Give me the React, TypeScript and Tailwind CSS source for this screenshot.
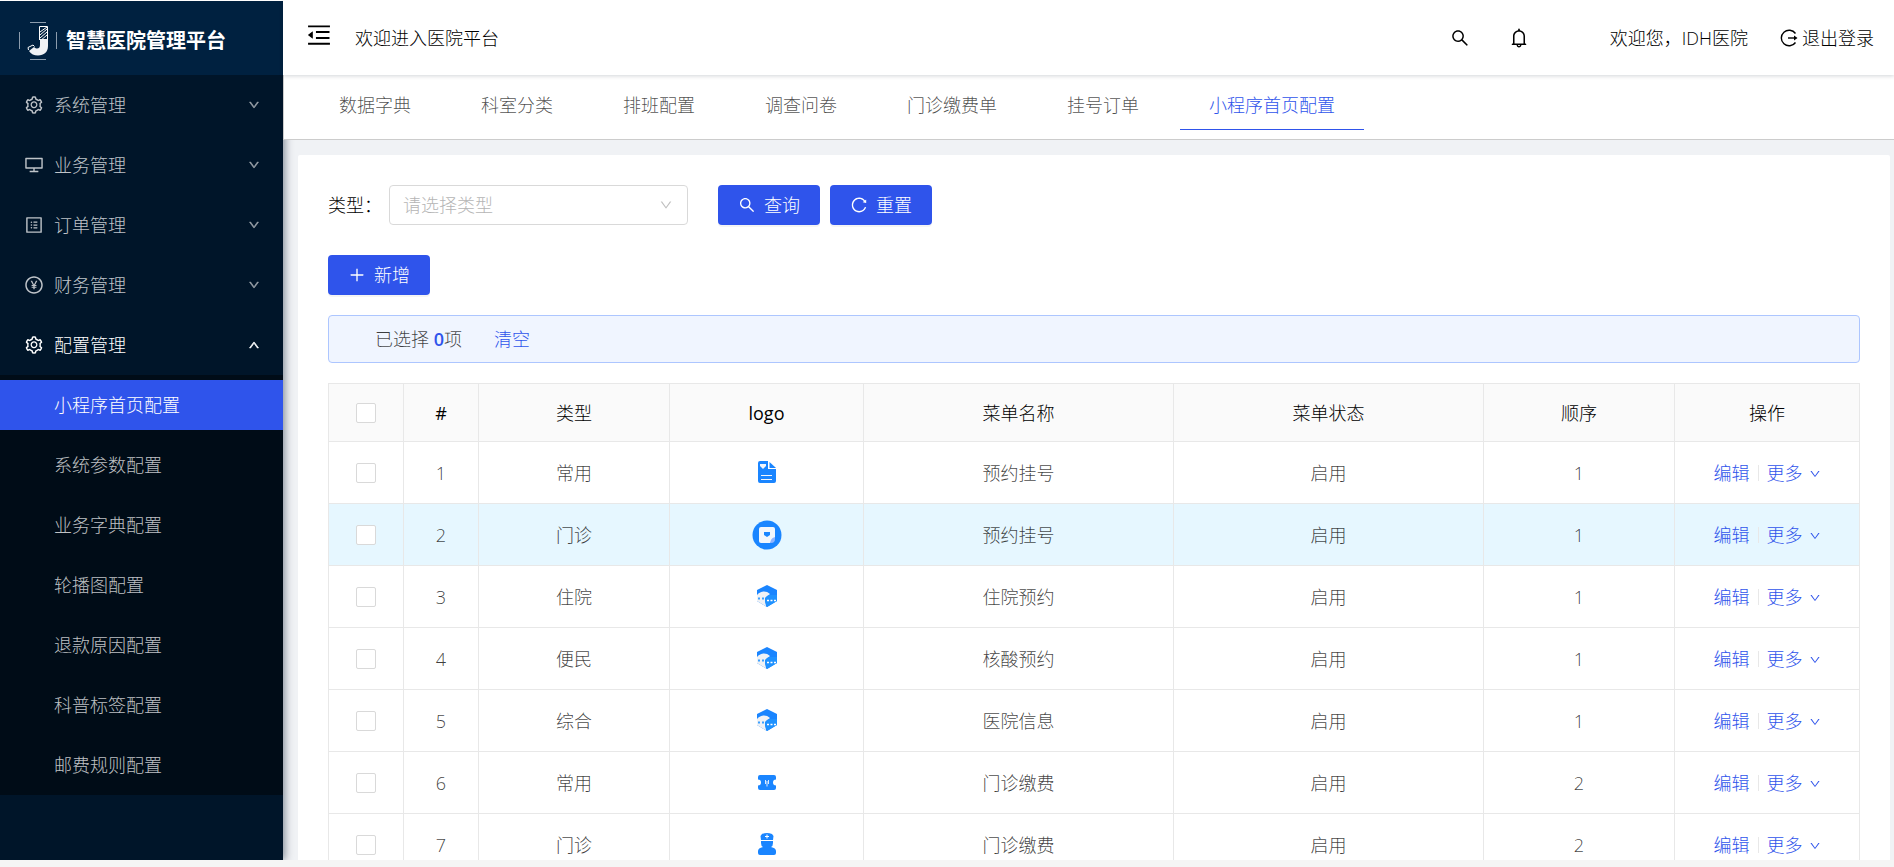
import type { ComponentType } from "react"
import {
  AiOutlineBell,
  AiOutlineDesktop,
  AiOutlineDown,
  AiOutlineMenuFold,
  AiOutlinePayCircle,
  AiOutlinePlus,
  AiOutlineProfile,
  AiOutlineReload,
  AiOutlineSearch,
  AiOutlineSetting,
} from "react-icons/ai"

type IconType = ComponentType<{ className?: string }>

const menus: { label: string; icon: IconType; open?: boolean }[] = [
  { label: "系统管理", icon: AiOutlineSetting },
  { label: "业务管理", icon: AiOutlineDesktop },
  { label: "订单管理", icon: AiOutlineProfile },
  { label: "财务管理", icon: AiOutlinePayCircle },
  { label: "配置管理", icon: AiOutlineSetting, open: true },
]

const subMenus = [
  "小程序首页配置",
  "系统参数配置",
  "业务字典配置",
  "轮播图配置",
  "退款原因配置",
  "科普标签配置",
  "邮费规则配置",
]

const tabs = ["数据字典", "科室分类", "排班配置", "调查问卷", "门诊缴费单", "挂号订单", "小程序首页配置"]

const rows = [
  { type: "常用", logo: DocLogo, name: "预约挂号", order: 1 },
  { type: "门诊", logo: NoteLogo, name: "预约挂号", order: 1 },
  { type: "住院", logo: ChatLogo, name: "住院预约", order: 1 },
  { type: "便民", logo: ChatLogo, name: "核酸预约", order: 1 },
  { type: "综合", logo: ChatLogo, name: "医院信息", order: 1 },
  { type: "常用", logo: TicketLogo, name: "门诊缴费", order: 2 },
  { type: "门诊", logo: NurseLogo, name: "门诊缴费", order: 2 },
]

function DocLogo() {
  return (
    <svg viewBox="0 0 30 30" className="mx-auto size-[30px]">
      <path d="M8 3h8v8h8v12a2 2 0 0 1-2 2H8a2 2 0 0 1-2-2V5a2 2 0 0 1 2-2z" fill="#1a85ff" />
      <path d="M17.500 4l6.500 6h-6.500z" fill="#1a85ff" />
      <path d="M8 6h6v2l-3 3-3-3z" fill="#f2f6fc" />
      <path d="M9 17.500h11M9 21.500h11" stroke="#f2f6fc" />
    </svg>
  )
}

function NoteLogo() {
  return (
    <svg viewBox="0 0 30 30" className="mx-auto size-[30px]">
      <circle cx="15" cy="15" r="14.500" fill="#1a85ff" />
      <path d="M9 7h12a2 2 0 0 1 2 2v9l-5 5H9a2 2 0 0 1-2-2V9a2 2 0 0 1 2-2z" fill="#f2f6fc" />
      <path d="M23 17v2a4 4 0 0 1-4 4h-1c1-4 2-5 5-6z" fill="#8fb4ff" />
      <path d="M12 12h6v3l-3 2-3-2z" fill="#1a85ff" />
    </svg>
  )
}

function ChatLogo() {
  return (
    <svg viewBox="0 0 30 30" className="mx-auto size-[30px]">
      <path d="M15 3l10 5v11l-10 6-10-6V8z" fill="#1a85ff" />
      <path d="M5 13c3-4 9-5 13-1l-5 4 1 8.500L5 19z" fill="#f0f2f5" />
      <path d="M13 20a5.500 5.500 0 0 1 5.500-7H25v6l-10 6z" fill="#1f92ff" />
      <path d="M6 16.500h2M10 16.500h2" stroke="#3ba0ff" strokeWidth="2" />
      <path d="M15 18.500h2M18.500 18.500h2M22 18.500h2" stroke="#fff" strokeWidth="1.600" />
    </svg>
  )
}

function TicketLogo() {
  return (
    <svg viewBox="0 0 30 30" className="mx-auto size-[30px]">
      <path
        d="M8 7h14a2 2 0 0 1 2 2v2.500a3 3 0 0 0 0 6V20a2 2 0 0 1-2 2H8a2 2 0 0 1-2-2v-2.500a3 3 0 0 0 0-6V9a2 2 0 0 1 2-2z"
        fill="#1a85ff"
      />
      <path d="M13.500 12v4M16.500 12v4M15 13v5.500" stroke="#dbeaff" fill="none" />
    </svg>
  )
}

function NurseLogo() {
  return (
    <svg viewBox="0 0 30 30" className="mx-auto size-[30px]">
      <path d="M10 4q5-2 10 0l1.500 2-.5 4H9l-.5-4z" fill="#1a85ff" />
      <path d="M9 11h12v2q0 3-2 4 5 1 5 4v2a2 2 0 0 1-2 2H8a2 2 0 0 1-2-2v-2q0-3 5-4-2-1-2-4z" fill="#1a85ff" />
      <path d="M15 4.500v4M13 6.500h4" stroke="#fff" />
    </svg>
  )
}

function BrandLogo() {
  return (
    <svg viewBox="0 0 40 40" className="size-10" fill="none">
      <path d="M12 1.500h16M12 38.500h16M1.500 11v17M38.500 11v17" stroke="#8c9cad" />
      <path d="M21.500 19V5.500h8V20" stroke="#fff" />
      <path d="M22 11l7-5M22 14l7-6M22 17l7-6M22 20l7-6" stroke="#fff" />
      <path d="M22 18h8v7c0 6-4 9.500-10 9.500-4 0-7-1.500-9-4.500l5-4c3 3 6 1.500 6-2z" fill="#f0f2f5" />
      <path d="M10.500 29l-.5-2.500 5-2.500 1.500 1.500" stroke="#fff" />
    </svg>
  )
}

function LogoutIcon() {
  return (
    <svg viewBox="0 0 18 18" className="size-[18px]" fill="none" stroke="currentColor">
      <path d="M15.500 4.500a7.800 7.800 0 1 0 0 9" strokeWidth="1.400" />
      <path d="M8 9h7" strokeWidth="1.400" />
      <path d="M14 6.500L17.500 9 14 11.500z" fill="currentColor" stroke="none" />
    </svg>
  )
}

function Sidebar() {
  return (
    <aside className="relative z-10 w-[283px] shrink-0 border-t border-white bg-[#001529] shadow-[2px_0_8px_rgba(0,21,41,0.45)]">
      <div className="flex h-[74px] items-center gap-2 bg-[#002140] pl-[18px] pt-1.5">
        <BrandLogo />
        <h1 className="text-xl font-bold text-white">智慧医院管理平台</h1>
      </div>
      <nav className="text-lg text-white/75">
        {menus.map((m) => (
          <div key={m.label} className="py-[5px]">
            <button className={m.open ? "flex h-[50px] w-full items-center pl-6 pr-[23px] text-white" : "flex h-[50px] w-full items-center pl-6 pr-[23px]"}>
              <m.icon className="size-5" />
              <span className="ml-2.5 flex-1 text-left">{m.label}</span>
              <AiOutlineDown className={m.open ? "size-3 rotate-180 stroke-[60]" : "size-3 stroke-[60] opacity-70"} />
            </button>
          </div>
        ))}
        <ul className="bg-[#000c17]">
          {subMenus.map((s, i) => (
            <li key={s} className="py-[5px]">
              <a
                href="#"
                className={i === 0 ? "flex h-[50px] items-center bg-[#2f54eb] pl-[54px] text-white" : "flex h-[50px] items-center pl-[54px]"}
              >
                {s}
              </a>
            </li>
          ))}
        </ul>
      </nav>
    </aside>
  )
}

function TopBar() {
  return (
    <header className="relative z-30 flex h-[75px] items-center bg-white pl-[22px] pr-5 text-lg text-black shadow-[0_1px_4px_rgba(0,21,41,0.18)]">
      <button aria-label="收起菜单">
        <AiOutlineMenuFold className="mb-1.5 size-7" />
      </button>
      <span className="ml-[22px] flex-1">欢迎进入医院平台</span>
      <button aria-label="搜索">
        <AiOutlineSearch className="size-5" />
      </button>
      <button aria-label="通知" className="ml-[38px]">
        <AiOutlineBell className="size-[22px]" />
      </button>
      <span className="ml-20">欢迎您，IDH医院</span>
      <a href="#" className="ml-8 flex items-center gap-1">
        <LogoutIcon />
        退出登录
      </a>
    </header>
  )
}

function TabBar() {
  return (
    <div className="relative z-20 flex h-[65px] items-start gap-3 border-b border-l border-[#ccc] bg-white pl-[26px] text-lg text-black/70">
      {tabs.map((t) => (
        <button
          key={t}
          className={
            t === "小程序首页配置"
              ? "h-[55px] border-b border-[#2f54eb] px-[29px] pt-1.5 text-[#2f54eb]"
              : "h-[55px] border-b border-transparent px-[29px] pt-1.5"
          }
        >
          {t}
        </button>
      ))}
    </div>
  )
}

const primaryButton =
  "flex h-10 items-center justify-center gap-2 rounded bg-[#2f54eb] px-5 text-lg text-white shadow-[0_2px_0_rgba(0,0,0,0.045)]"

function Filters() {
  return (
    <div className="flex items-center">
      <label htmlFor="type" className="w-[61px] text-lg text-black">
        类型：
      </label>
      <div className="relative w-[299px]">
        <select
          id="type"
          defaultValue=""
          className="h-10 w-full appearance-none rounded border border-[#d9d9d9] bg-white px-[13px] text-lg text-[#b5b5b5]"
        >
          <option value="">请选择类型</option>
        </select>
        <AiOutlineDown className="pointer-events-none absolute right-[15px] top-[13px] size-3.5 text-[#bfbfbf]" />
      </div>
      <button className={`${primaryButton} ml-[30px]`}>
        <AiOutlineSearch className="size-[18px]" />
        查询
      </button>
      <button className={`${primaryButton} ml-2.5`}>
        <AiOutlineReload className="size-[18px]" />
        重置
      </button>
    </div>
  )
}

function Checkbox({ label }: { label: string }) {
  return (
    <input
      type="checkbox"
      aria-label={label}
      className="mx-auto block size-5 appearance-none rounded-xs border border-[#d9d9d9] bg-white"
    />
  )
}

function MenuTable() {
  return (
    <table className="mt-5 w-full table-fixed border-collapse text-center text-lg text-black/75 [&_td]:border [&_td]:border-[#e8e8e8] [&_th]:border [&_th]:border-[#e8e8e8]">
      <colgroup>
        <col className="w-[75px]" />
        <col className="w-[75px]" />
        <col className="w-[191px]" />
        <col className="w-[194px]" />
        <col className="w-[310px]" />
        <col className="w-[310px]" />
        <col className="w-[191px]" />
        <col className="w-[185px]" />
      </colgroup>
      <thead>
        <tr className="h-[58px] bg-[#fafafa] text-black">
          <th>
            <Checkbox label="全选" />
          </th>
          <th className="font-normal">#</th>
          <th className="font-light">类型</th>
          <th className="font-normal">logo</th>
          <th className="font-light">菜单名称</th>
          <th className="font-light">菜单状态</th>
          <th className="font-light">顺序</th>
          <th className="font-light">操作</th>
        </tr>
      </thead>
      <tbody>
        {rows.map((r, i) => (
          <tr key={i} className={i === 1 ? "h-[62px] bg-[#e6f7ff]" : "h-[62px]"}>
            <td>
              <Checkbox label={`选择第${i + 1}行`} />
            </td>
            <td>{i + 1}</td>
            <td>{r.type}</td>
            <td>
              <r.logo />
            </td>
            <td>{r.name}</td>
            <td>启用</td>
            <td>{r.order}</td>
            <td>
              <div className="flex items-center justify-center text-[#2f54eb]">
                <a href="#">编辑</a>
                <span className="mx-2 h-4 w-px bg-[#e8e8e8]" />
                <button className="flex items-center gap-1.5">
                  更多
                  <AiOutlineDown className="mt-0.5 size-3" />
                </button>
              </div>
            </td>
          </tr>
        ))}
      </tbody>
    </table>
  )
}

export default function App() {
  return (
    <div className="h-screen overflow-hidden bg-[#f5f5f5] pb-[7px] font-['Open_Sans','Noto_Sans_CJK_SC',sans-serif] font-light">
      <div className="flex h-full overflow-hidden">
        <Sidebar />
        <div className="flex min-w-0 flex-1 flex-col bg-[#f0f2f5]">
          <TopBar />
          <TabBar />
          <main className="ml-[15px] mr-1 mt-[15px] flex-1 overflow-hidden rounded-t-xs bg-white px-[30px] pt-[30px]">
            <Filters />
            <button className={`${primaryButton} mt-[30px]`}>
              <AiOutlinePlus className="size-[18px]" />
              新增
            </button>
            <div className="mt-5 flex h-12 items-center rounded border border-[#adc6ff] bg-[#f0f5ff] pl-[46px] text-lg text-black/75">
              已选择&nbsp;<b className="font-semibold text-[#2f54eb]">0</b>项
              <a href="#" className="ml-8 text-[#2f54eb]">
                清空
              </a>
            </div>
            <MenuTable />
          </main>
        </div>
      </div>
    </div>
  )
}
